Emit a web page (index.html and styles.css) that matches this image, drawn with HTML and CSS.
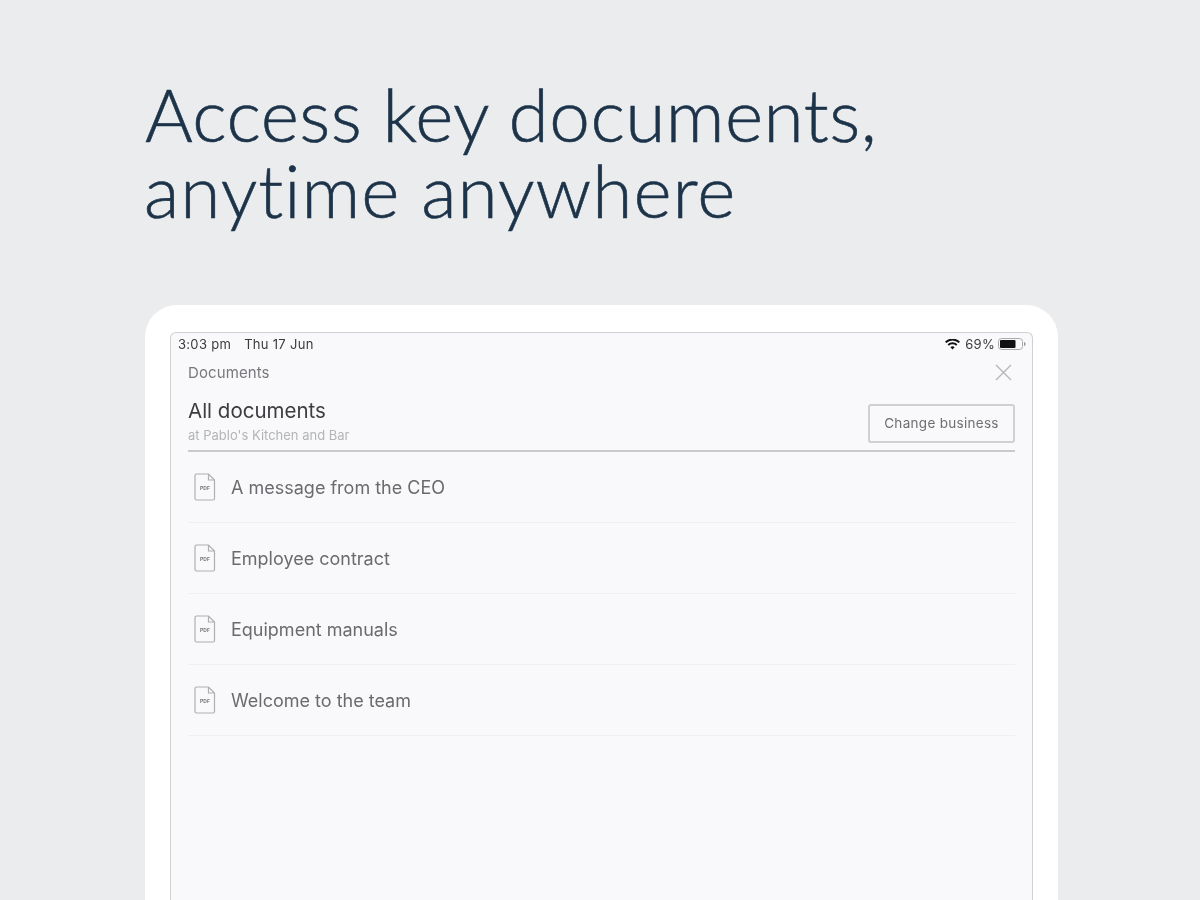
FILE: index.html
```html
<!DOCTYPE html>
<html lang="en">
<head>
<meta charset="utf-8">
<title>Documents</title>
<link rel="stylesheet" href="styles.css">
</head>
<body>
<main class="page">
  <h1 class="headline"><span class="line-one">Access key documents,</span><span class="line-two">anytime anywhere</span></h1>
  <section class="device">
    <div class="screen">
      <div class="status">
        <div class="status-left"><span>3:03 pm</span><span>Thu 17 Jun</span></div>
        <div class="status-right">
          <svg class="wifi" width="15" height="11" viewBox="0 0 15 11"><path d="M7.500 10.500 5.400 8.200a3 3 0 0 1 4.200 0zM3.900 6.700 2.600 5.300a7 7 0 0 1 9.800 0l-1.300 1.400a5.100 5.100 0 0 0-7.200 0zM1.400 4.100 0 2.700a10.600 10.600 0 0 1 15 0l-1.400 1.400a8.600 8.600 0 0 0-12.200 0z" fill="#111"/></svg>
          <span>69%</span>
          <svg class="battery" width="28" height="12" viewBox="0 0 28 12"><rect x="0.500" y="0.500" width="24" height="11" rx="3" fill="none" stroke="#aaa"/><rect x="2" y="2" width="15.500" height="8" rx="1" fill="#111"/><path d="M26 4v4c1-.3 1.600-1 1.600-2S27 4.300 26 4z" fill="#999"/></svg>
        </div>
      </div>
      <div class="crumb">
        <span>Documents</span>
        <svg class="close" width="17" height="17" viewBox="0 0 17 17"><path d="M1 1l15 15M16 1 1 16" stroke="#b5b6b9" stroke-width="1.400" fill="none"/></svg>
      </div>
      <div class="title-row">
        <div>
          <h2 class="title">All documents</h2>
          <p class="subtitle">at Pablo's Kitchen and Bar</p>
        </div>
        <button class="change">Change business</button>
      </div>
      <ul class="docs">
        <li class="doc"><svg class="pdf" width="22" height="28" viewBox="0 0 22 28"><path d="M2.500 1h12l6 6v18.500a1.500 1.500 0 0 1-1.500 1.500H2.500A1.500 1.500 0 0 1 1 25.500v-23A1.500 1.500 0 0 1 2.500 1zM14.500 1v6h6" fill="none" stroke="#aeafb2" stroke-width="1.200"/><text class="pdf-label" x="11" y="16.500" text-anchor="middle">PDF</text></svg><span>A message from the CEO</span></li>
        <li class="doc"><svg class="pdf" width="22" height="28" viewBox="0 0 22 28"><path d="M2.500 1h12l6 6v18.500a1.500 1.500 0 0 1-1.500 1.500H2.500A1.500 1.500 0 0 1 1 25.500v-23A1.500 1.500 0 0 1 2.500 1zM14.500 1v6h6" fill="none" stroke="#aeafb2" stroke-width="1.200"/><text class="pdf-label" x="11" y="16.500" text-anchor="middle">PDF</text></svg><span>Employee contract</span></li>
        <li class="doc"><svg class="pdf" width="22" height="28" viewBox="0 0 22 28"><path d="M2.500 1h12l6 6v18.500a1.500 1.500 0 0 1-1.500 1.500H2.500A1.500 1.500 0 0 1 1 25.500v-23A1.500 1.500 0 0 1 2.500 1zM14.500 1v6h6" fill="none" stroke="#aeafb2" stroke-width="1.200"/><text class="pdf-label" x="11" y="16.500" text-anchor="middle">PDF</text></svg><span>Equipment manuals</span></li>
        <li class="doc"><svg class="pdf" width="22" height="28" viewBox="0 0 22 28"><path d="M2.500 1h12l6 6v18.500a1.500 1.500 0 0 1-1.500 1.500H2.500A1.500 1.500 0 0 1 1 25.500v-23A1.500 1.500 0 0 1 2.500 1zM14.500 1v6h6" fill="none" stroke="#aeafb2" stroke-width="1.200"/><text class="pdf-label" x="11" y="16.500" text-anchor="middle">PDF</text></svg><span>Welcome to the team</span></li>
      </ul>
    </div>
  </section>
</main>
</body>
</html>
```

FILE: styles.css
```css
* { box-sizing: border-box; }
html, body { margin: 0; height: 100%; }
body { background: #ebecee; overflow: hidden; font-family: "Inter", "Liberation Sans", sans-serif; }
.page { height: 900px; padding: 76px 142px 0 145px; display: flex; flex-direction: column; overflow: hidden; }
.headline { margin: 0; font-family: "Lato", sans-serif; font-weight: 300; font-size: 73px; line-height: 76px; color: #1c3349; font-variant-ligatures: none; -webkit-text-stroke: 0.6px #1c3349; filter: blur(0.4px); }
.line-one { display: block; letter-spacing: 0.45px; }
.line-two { display: block; letter-spacing: 1px; margin-left: -1px; }
.device { margin-top: 77px; flex: 1; background: #fff; border-radius: 32px 32px 0 0; padding: 27px 25px 0; display: flex; }
.screen { flex: 1; background: #f9f9fb; border: 1px solid #cfd0d2; border-bottom: 0; border-radius: 6px 6px 0 0; padding: 0 17px; filter: blur(0.5px); }
.status { margin: 0 -10px; height: 22px; display: flex; justify-content: space-between; align-items: center; font-size: 13px; letter-spacing: 0.3px; color: #3a3a3c; }
.status-left { display: flex; gap: 13px; }
.status-right { display: flex; align-items: center; gap: 5px; margin-right: -1px; }
.battery { margin-left: -2px; }
.crumb { height: 34px; display: flex; justify-content: space-between; align-items: center; font-size: 15px; letter-spacing: 0.1px; color: #77787b; }
.close { margin-right: 3px; }
.title-row { height: 63px; display: flex; justify-content: space-between; align-items: flex-end; border-bottom: 2px solid #c9cacc; padding-bottom: 7px; }
.title { margin: 0; font-size: 20.500px; font-weight: 400; line-height: 24px; color: #3c3d40; }
.subtitle { margin: 5px 0 0; font-size: 13px; line-height: 15px; color: #b3b4b7; }
.change { width: 147px; height: 39px; background: transparent; border: 2px solid #cfd0d2; border-radius: 3px; font: 400 13.500px "Inter", sans-serif; letter-spacing: 0.3px; color: #6d6e71; padding: 0 0 2px; }
.docs { list-style: none; margin: 0; padding: 0; }
.doc { height: 71px; display: flex; align-items: center; gap: 15px; padding-left: 6px; border-bottom: 1px solid #eeeff1; font-size: 18px; color: #6a6b6e; }
.pdf-label { font: 700 5px "Inter", sans-serif; fill: #77787b; }
```
